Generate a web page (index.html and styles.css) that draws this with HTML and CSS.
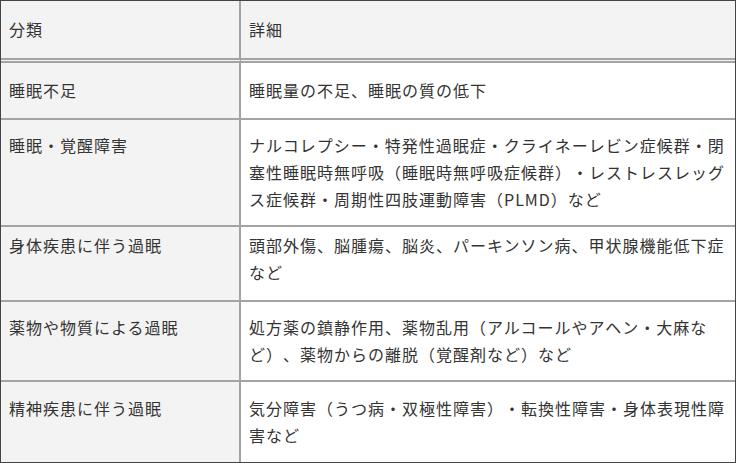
FILE: index.html
```html
<!DOCTYPE html>
<html lang="ja">
<head>
<meta charset="utf-8">
<link rel="stylesheet" href="styles.css">
</head>
<body>
<table class="tbl">
  <colgroup><col class="c1"><col class="c2"></colgroup>
  <thead>
    <tr class="rh"><th class="cat">分類</th><th class="det">詳細</th></tr>
  </thead>
  <tbody>
    <tr class="r1"><td class="cat">睡眠不足</td><td class="det">睡眠量の不足、睡眠の質の低下</td></tr>
    <tr class="r2"><td class="cat"><div class="first">睡眠・覚醒障害</div></td><td class="det">ナルコレプシー・特発性過眠症・クライネーレビン症候群・閉塞性睡眠時無呼吸（睡眠時無呼吸症候群）・レストレスレッグス症候群・周期性四肢運動障害（PLMD）など</td></tr>
    <tr class="r3"><td class="cat"><div class="first">身体疾患に伴う過眠</div></td><td class="det">頭部外傷、脳腫瘍、脳炎、パーキンソン病、甲状腺機能低下症など</td></tr>
    <tr class="r4"><td class="cat"><div class="first">薬物や物質による過眠</div></td><td class="det">処方薬の鎮静作用、薬物乱用（アルコールやアヘン・大麻など）、薬物からの離脱（覚醒剤など）など</td></tr>
    <tr class="r5 last"><td class="cat"><div class="first">精神疾患に伴う過眠</div></td><td class="det">気分障害（うつ病・双極性障害）・転換性障害・身体表現性障害など</td></tr>
  </tbody>
</table>
</body>
</html>
```
FILE: styles.css
```css
html, body {
  margin: 0;
  padding: 0;
  background: #ffffff;
}
.tbl {
  width: 736px;
  table-layout: fixed;
  border-collapse: separate;
  border-spacing: 0;
  border: 1px solid #444444;
  font-family: "Noto Sans CJK JP", "Noto Sans", sans-serif;
  font-size: 16px;
  line-height: 27px;
  letter-spacing: 1px;
  color: #333333;
  text-spacing-trim: space-all;
}
.c1 { width: 240px; }
.tbl th,
.tbl td {
  text-align: left;
  font-weight: normal;
  padding: 0 7px 0 8px;
  vertical-align: middle;
  border-bottom: 2px solid #a3a3a3;
}
.tbl .cat {
  background: #f3f3f3;
  border-right: 2px solid #a3a3a3;
}
.tbl th {
  background: #f3f3f3;
  border-bottom: 5px double #a3a3a3;
}
.tbl .last td {
  border-bottom: none;
}
.tbl .cat .first {
  height: 81px;
}
.r3 .cat .first,
.r4 .cat .first,
.r5 .cat .first {
  height: 54px;
}
.tbl .r3 td {
  padding-bottom: 10px;
}
.rh { height: 62px; }
.r1 { height: 57px; }
.r2 { height: 107px; }
.r3 { height: 75px; }
.r4 { height: 80px; }
.r5 { height: 80px; }
```
